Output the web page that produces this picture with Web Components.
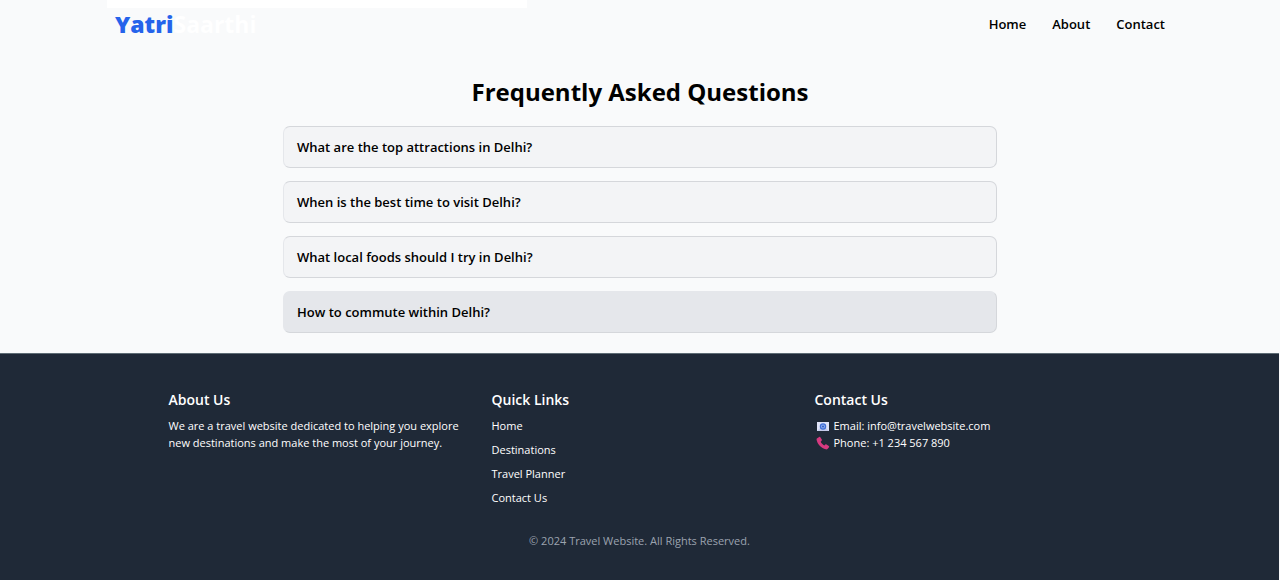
<!DOCTYPE html>
<html lang="en">
<head>
<meta charset="utf-8">
<meta name="viewport" content="width=device-width, initial-scale=1">
<title>YatriSaarthi – FAQ</title>
<style>
body { margin: 0; background: #f9fafb; color: #000; font-family: "Open Sans", "Noto Sans", sans-serif; font-size: 13px; line-height: 20px; }
</style>
</head>
<body>
<travel-page></travel-page>
<script>
const define = (name, html) => customElements.define(name, class extends HTMLElement {
  constructor() {
    super();
    const t = document.createElement('template');
    t.innerHTML = html;
    this.attachShadow({ mode: 'open' }).append(t.content.cloneNode(true));
  }
});

define('site-header', `
<style>
:host { display: block; }
.wrap { max-width: 1066px; margin: 0 auto; }
.strip { width: 420px; max-width: 100%; height: 8px; background: #fff; }
.bar { display: flex; justify-content: space-between; align-items: center; padding: 0 8px; height: 32px; }
.logo { font-size: 23px; line-height: 32px; font-weight: 700; color: #fff; text-decoration: none; }
.logo b { color: #2563eb; }
nav { display: flex; gap: 26px; }
nav a { color: #000; text-decoration: none; font-weight: 600; }
</style>
<header class="wrap">
  <div class="strip"></div>
  <div class="bar">
    <a class="logo" href="#"><b>Yatri</b>Saarthi</a>
    <nav><a href="#home">Home</a><a href="#about">About</a><a href="#contact">Contact</a></nav>
  </div>
</header>`);

define('faq-item', `
<style>
:host { display: block; }
button { display: block; width: 100%; box-sizing: border-box; padding: 10px 13px; border: 1px solid #d5d7db; border-left-color: #e5e7eb; border-radius: 7px; background: #f3f4f6; color: #000; font: inherit; font-weight: 600; text-align: left; cursor: pointer; }
button:hover, :host([active]) button { background: #e5e7eb; border-color: #e5e7eb #d5d7db #d5d7db #e5e7eb; }
</style>
<button type="button" aria-expanded="false"><slot></slot></button>`);

define('faq-section', `
<style>
:host { display: block; max-width: 714px; margin: 0 auto; padding: 34px 16px 20px; }
h2 { margin: 0 0 16px; font-size: 24px; line-height: 36px; font-weight: 700; text-align: center; }
.list { display: grid; gap: 13px; }
</style>
<section>
  <h2>Frequently Asked Questions</h2>
  <div class="list"><slot></slot></div>
</section>`);

define('footer-column', `
<style>
:host { display: block; }
h3 { margin: 0 0 5px; font-size: 14px; line-height: 24px; font-weight: 600; }
</style>
<h3><slot name="title"></slot></h3>
<slot></slot>`);

define('site-footer', `
<style>
:host { display: block; background: #1f2937; color: #fff; border-top: 1px solid #5d6b74; font-size: 11px; line-height: 17px; margin-right: 1px; }
.cols { display: grid; grid-template-columns: repeat(3, minmax(0, 1fr)); gap: 27px; max-width: 942px; margin: 0 auto; padding: 34px 0 26px; }
p { margin: 0; }
ul { list-style: none; margin: 0; padding: 0; display: grid; gap: 7px; }
li { height: 17px; }
a { color: inherit; text-decoration: none; }
.row { display: flex; align-items: center; gap: 3px; }
svg { width: 16px; height: 16px; flex: none; }
.copy { text-align: center; color: #9ca3af; padding-bottom: 32px; }
</style>
<footer>
  <div class="cols">
    <footer-column><span slot="title">About Us</span>
      <p>We are a travel website dedicated to helping you explore new destinations and make the most of your journey.</p>
    </footer-column>
    <footer-column><span slot="title">Quick Links</span>
      <ul><li><a href="#home">Home</a></li><li><a href="#destinations">Destinations</a></li><li><a href="#planner">Travel Planner</a></li><li><a href="#contact">Contact Us</a></li></ul>
    </footer-column>
    <footer-column><span slot="title">Contact Us</span>
      <p class="row"><svg viewBox="0 0 16 16" aria-hidden="true"><rect x="2" y="4" width="12" height="9" fill="#dfe3f8"/><path d="M2 13 6 9h4l4 4z" fill="#c5cbea"/><circle cx="8" cy="8.5" r="2.6" fill="#8fb2f2" stroke="#416fd6" stroke-width="1.3"/><circle cx="8" cy="8.5" r="1" fill="#3559bd"/></svg><span>Email: info@travelwebsite.com</span></p>
      <p class="row"><svg viewBox="0 0 16 16" aria-hidden="true"><path d="M2.2 3.2 4.2 2c.5-.3 1-.1 1.3.4l1.3 2.200c.2.4.1.8-.2 1.200l-.9 1c.8 1.600 2 2.800 3.600 3.600l1-.9c.4-.3.8-.4 1.200-.1l2.300 1.600c.4.3.5.7.2 1.200l-1.300 1.600c-.5.6-1.200.7-1.900.5C6.200 13 2.900 10 1.700 5.300c-.2-.9-.1-1.700.5-2.100z" fill="#d63a80"/></svg><span>Phone: +1 234 567 890</span></p>
    </footer-column>
  </div>
  <p class="copy">© 2024 Travel Website. All Rights Reserved.</p>
</footer>`);

define('travel-page', `
<style>:host { display: block; }</style>
<site-header></site-header>
<main><faq-section>
  <faq-item>What are the top attractions in Delhi?</faq-item>
  <faq-item>When is the best time to visit Delhi?</faq-item>
  <faq-item>What local foods should I try in Delhi?</faq-item>
  <faq-item active>How to commute within Delhi?</faq-item>
</faq-section></main>
<site-footer></site-footer>`);
</script>
</body>
</html>
